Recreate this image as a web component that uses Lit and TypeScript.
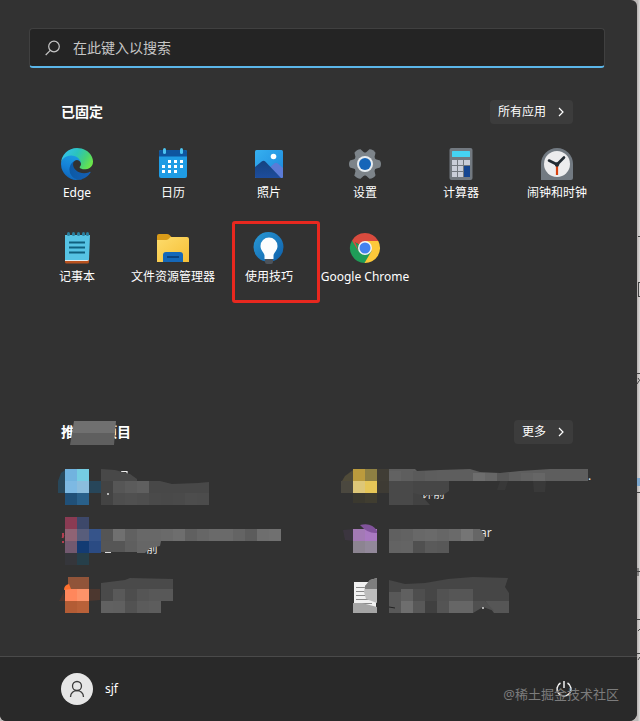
import { LitElement, html, svg, css } from "lit";
import { customElement } from "lit/decorators.js";
import { classMap } from "lit/directives/class-map.js";

type Block = [string, string];

/** Builds closed shapes from [points, fill] pairs. */
const blocks = (list: Block[]) =>
  list.map(([points, fill]) => svg`<polygon points=${points} fill=${fill} />`);

/** Builds a run of equal cells: start x, y, cell width, height, one fill per cell. */
const cells = (x: number, y: number, w: number, h: number, fills: string[]) =>
  fills.map((f, i) => svg`<rect x=${x + i * w} y=${y} width=${w} height=${h} fill=${f} />`);

const icon = (content: unknown) =>
  html`<svg class="icon" viewBox="0 0 32 32" aria-hidden="true">${content}</svg>`;

const edge = icon(svg`
  <defs>
    <linearGradient id="e1" x1="0" y1="0.7" x2="1" y2="0.7"><stop offset="0" stop-color="#0c59a4"/><stop offset="1" stop-color="#1560b5"/></linearGradient>
    <linearGradient id="e2" x1="0.6" y1="0" x2="0.3" y2="1"><stop offset="0" stop-color="#1b9de2"/><stop offset="0.5" stop-color="#1583d8"/><stop offset="1" stop-color="#0f63b8"/></linearGradient>
    <linearGradient id="e3" x1="0" y1="0.2" x2="1" y2="0.6"><stop offset="0" stop-color="#35c1f1"/><stop offset="0.45" stop-color="#2bc3bd"/><stop offset="0.75" stop-color="#46d178"/><stop offset="1" stop-color="#6be54a"/></linearGradient>
  </defs>
  <g transform="scale(0.125)">
    <path fill="url(#e1)" transform="translate(-4.6 -5)" d="M235.7 195.5a93.7 93.7 0 0 1-10.5 4.7 101.9 101.9 0 0 1-35.9 6.4c-47.3 0-88.5-32.5-88.5-74.3A31.5 31.5 0 0 1 117.1 105c-42.8 1.8-53.8 46.4-53.8 72.5 0 73.9 68.1 81.4 82.8 81.4 7.9 0 19.8-2.3 27-4.6l1.3-.4a128.3 128.3 0 0 0 66.6-52.8 4 4 0 0 0-5.3-5.6z"/>
    <path fill="url(#e2)" transform="translate(-4.6 -5)" d="M110.3 246.3A79.2 79.2 0 0 1 87.6 225a80.7 80.7 0 0 1 29.5-120c3.1-1.5 8.5-4.1 15.5-4a32.4 32.4 0 0 1 25.7 13 31.9 31.9 0 0 1 6.4 18.7c0-.2 24.5-79.6-80-79.6-43.9 0-80 41.7-80 78.2a130.2 130.2 0 0 0 12.1 56 128 128 0 0 0 156.4 67.1 75.6 75.6 0 0 1-62.8-8z"/>
    <path fill="url(#e3)" transform="translate(-4.6 -5)" d="M156.9 153.8c-.8 1-3.3 2.5-3.3 5.7 0 2.6 1.7 5.1 4.7 7.2 14.4 10 41.5 8.7 41.6 8.7a59.6 59.6 0 0 0 30.3-8.4 61.4 61.4 0 0 0 30.4-52.9c.3-22.4-8-37.3-11.3-43.9C228.1 28.8 182.4 5 132.6 5A128 128 0 0 0 4.6 131.2c.5-36.5 36.8-66 80-66 3.5 0 23.5.3 42 10 16.3 8.6 24.9 18.9 30.9 29.2 6.2 10.7 7.3 24.2 7.3 29.5s-2.7 13.3-7.9 19.9z"/>
  </g>`);

const calendar = icon(svg`
  <rect x="2" y="2" width="28" height="28" rx="2" fill="#1f9ce4"/>
  <path d="M4 2h24a2 2 0 0 1 2 2v4.5H2V4a2 2 0 0 1 2-2z" fill="#0e559f"/>
  <rect x="6" y="0" width="3" height="6" rx="1.5" fill="#4cc4f2"/>
  <rect x="23" y="0" width="3" height="6" rx="1.5" fill="#4cc4f2"/>
  <path fill="#fff" d="M11 12h3v3h-3zM17 12h3v3h-3zM23 12h3v3h-3zM5 17h3v3H5zM11 17h3v3h-3zM17 17h3v3h-3zM23 17h3v3h-3zM5 22h3v3H5zM11 22h3v3h-3zM17 22h3v3h-3z"/>`);

const photos = icon(svg`
  <defs>
    <linearGradient id="p1" x1="0" y1="0" x2="1" y2="1"><stop offset="0" stop-color="#36b0f0"/><stop offset="1" stop-color="#1c86da"/></linearGradient>
    <linearGradient id="p2" x1="0" y1="0" x2="0" y2="1"><stop offset="0" stop-color="#15437f"/><stop offset="1" stop-color="#1d4c9c"/></linearGradient>
    <clipPath id="pc"><rect x="2" y="2" width="28" height="28" rx="1.5"/></clipPath>
  </defs>
  <g clip-path="url(#pc)">
    <rect x="2" y="2" width="28" height="28" fill="url(#p1)"/>
    <path d="M15 21l6.500-5.700q1.500-1.200 3 0L30 20v10H15z" fill="#5b7bd6"/>
    <path d="M2 19l7-5.700q1.500-1.200 3 0L28 30H2z" fill="url(#p2)"/>
  </g>
  <circle cx="20.5" cy="8.500" r="2.800" fill="#fff"/>`);

const settings = icon(svg`
  <g fill="#7d848a">
    <circle cx="16" cy="16" r="11.5"/>
    ${[0, 60, 120].map((a) => svg`<path transform="rotate(${a} 16 16)" d="M1 12.500Q0 14 0 16t1 3.500l5 1.500h20l5-1.500q1-1.500 1-3.500t-1-3.500L26 11H6z"/>`)}
  </g>
  <circle cx="16" cy="16" r="8" fill="#e8edf1"/>
  <circle cx="16" cy="16" r="6" fill="#1565b8"/>`);

const calculator = icon(svg`
  <rect x="4.500" y="0" width="23" height="32" rx="2" fill="#727980"/>
  <rect x="7" y="3" width="18" height="6" rx="0.5" fill="#45d3f3"/>
  <path fill="#c9ced9" d="M7 12h5v5H7zM13 12h5v5h-5zM19 12h6v5h-6zM7 18h5v5H7zM13 18h5v5h-5zM7 24h5v5H7zM13 24h5v5h-5z"/>
  <rect x="19" y="18" width="6" height="11" fill="#154692"/>`);

const clock = icon(svg`
  <path d="M0 32V16a16 16 0 0 1 32 0v14a2 2 0 0 1-2 2z" fill="#727a82"/>
  <circle cx="16" cy="16" r="13" fill="#ececee"/>
  <path d="M16 17v10" stroke="#d8400f" stroke-width="2.200"/>
  <path d="M8 12.500l8 4 7-7" fill="none" stroke="#222b33" stroke-width="2.600" stroke-linecap="round" stroke-linejoin="round"/>
  <circle cx="16" cy="16.500" r="2.200" fill="#222b33"/>`);

const notepad = icon(svg`
  <rect x="4" y="25" width="24" height="6.500" rx="1.500" fill="#b9521f"/>
  <path d="M4 4h24v23a2 2 0 0 1-2 2H4z" fill="#e4eef2"/>
  <path d="M4 3h25l-1 25H4z" fill="#56c3e4"/>
  <g fill="#2a7f9f">${[7, 12, 17, 22, 26].map((x) => svg`<rect x=${x - 1} y="0" width="3" height="4" rx="1.500"/>`)}</g>
  <path d="M8 10.500h16M8 15.500h16M8 20.500h16" stroke="#10607f" stroke-width="2"/>`);

const folder = icon(svg`
  <defs><linearGradient id="f1" x1="0" y1="0" x2="1" y2="1"><stop offset="0" stop-color="#fddc6c"/><stop offset="1" stop-color="#f6bf35"/></linearGradient></defs>
  <path d="M0 4a2 2 0 0 1 2-2h8q1.500 0 2.500 1l2 2L10 9H0z" fill="#d99b18"/>
  <path d="M0 8h9q1.500 0 2.500-1l2-2H30a2 2 0 0 1 2 2v23H0z" fill="url(#f1)"/>
  <path d="M6 30v-7a3 3 0 0 1 3-3h14a3 3 0 0 1 3 3v7z" fill="#1568b9"/>
  <path d="M10 25h12" stroke="#0c437f" stroke-width="2"/>`);

const tips = icon(svg`
  <defs><linearGradient id="t1" x1="0" y1="0" x2="1" y2="1"><stop offset="0" stop-color="#2a9ad6"/><stop offset="1" stop-color="#0d5ea9"/></linearGradient></defs>
  <circle cx="15.500" cy="15" r="15" fill="url(#t1)"/>
  <path d="M12 26h8v4a2 2 0 0 1-2 2h-4a2 2 0 0 1-2-2z" fill="#4c535b"/>
  <path d="M16 5.500a8.500 8.500 0 0 1 8.500 8.500c0 4.500-3.500 6-4 9.500V27h-9v-3.500c-.5-3.500-4-5-4-9.500A8.500 8.500 0 0 1 16 5.500z" fill="#fbfcfd"/>`);

const chrome = icon(svg`
  <path d="M16 16L3 8.500a15 15 0 0 1 26 0z" fill="#d94b3e"/>
  <path d="M16 16L3 8.500A15 15 0 0 0 16 31l6.500-11.500z" fill="#1f9d58"/>
  <path d="M16 9h13.300A15 15 0 0 1 15.500 31l7-12z" fill="#fdc93a"/>
  <path d="M9.600 19.500L3 8.500l8 1.500 5-1h13.200L29 8.500 16 5 5 7z" fill="#d94b3e"/>
  <circle cx="16" cy="16" r="7" fill="#f4f4f4"/>
  <circle cx="16" cy="16" r="5.500" fill="#4382ee"/>`);

interface Pin { name: string; art: unknown; marked?: boolean }

const pins: Pin[] = [
  { name: "Edge", art: edge },
  { name: "日历", art: calendar },
  { name: "照片", art: photos },
  { name: "设置", art: settings },
  { name: "计算器", art: calculator },
  { name: "闹钟和时钟", art: clock },
  { name: "记事本", art: notepad },
  { name: "文件资源管理器", art: folder },
  { name: "使用技巧", art: tips, marked: true },
  { name: "Google Chrome", art: chrome },
];

/* Pixelated entries; each one lists its own view box and shapes. */
const recent = [
  {
    label: "项目 1",
    box: "29 460 288 54",
    art: svg`
      <path d="M121 471.500h6v3" fill="none" stroke="#eee" stroke-width="1.200"/>
      ${blocks([
        ["61,473 65,470 65,493 58,493 58,481", "#28475a"],
        ["89,481 101,481 101,493 89,493", "#27465a"],
        ["101,469 115,470 130,474 137,479 137,481 101,481", "#484848"],
        ["137,481 160,481 172,484 198,483 209,482 209,493 137,493", "#484848"],
        ["101,481 113,481 113,505 101,505", "#434343"],
      ])}
      ${cells(65, 469, 12, 12, ["#71b3df", "#75cde2"])}
      ${cells(65, 481, 12, 12, ["#7db9e3", "#8bbddd"])}
      ${cells(65, 493, 12, 12, ["#205078", "#29608a"])}
      ${cells(113, 481, 12, 12, ["#565656", "#5b5b5b", "#5f5f5f"])}
      ${cells(113, 493, 12, 12, ["#4e4e4e", "#505050", "#4e4e4e", "#4a4a4a", "#494949", "#4a4a4a", "#4d4d4d", "#4c4c4c"])}
      <circle cx="108" cy="494" r="1" fill="#ddd"/>`,
  },
  {
    label: "项目 2",
    box: "317 460 288 54",
    art: svg`
      <text x="421" y="498">钟前</text><text x="588" y="480">.</text>
      ${blocks([
        ["342,481 345,476 353,470 353,481", "#504b39"],
        ["389,469 415,469 417,471 440,470 470,469 480,472 500,473 520,471 550,469 588,469 588,481 389,481", "#5e5e5e"],
        ["389,481 413,481 413,505 389,505", "#494949"],
        ["413,481 449,481 449,491 443,495 413,495", "#464646"],
        ["413,493 421,495 430,505 413,505", "#424242"],
        ["500,481 508,481 505,490 497,490", "#383838"],
        ["533,481 546,481 545,492 534,492", "#393939"],
      ])}
      ${cells(353, 469, 12, 12, ["#bb9b3d", "#8e8043", "#403d35"])}
      ${cells(341, 481, 12, 12, ["#4b483f", "#dec778", "#e6c657", "#3e3b34"])}
      ${cells(353, 493, 12, 10, ["#3b392f", "#403d30"])}
      ${cells(389, 471, 12, 10, ["#626262", "#5e5e5e", "#5a5a5a", "#5d5d5d"])}
      ${cells(473, 473, 12, 8, ["#6d6d6d", "#666", "#575757", "#5e5e5e", "#626262", "#666"])}`,
  },
  {
    label: "项目 3",
    box: "29 514 288 54",
    art: svg`
      <text x="146" y="553">前</text><path d="M105 552.500h6" stroke="#ddd"/>
      <path d="M63 533v3M62.500 538l1-3M63 541v2" stroke="#b43d50" stroke-width="2"/>
      ${cells(65, 517, 12, 12, ["#8a3b53", "#3d486a"])}
      ${cells(65, 529, 12, 12, ["#8f6374", "#585d7b", "#36548a"])}
      ${cells(65, 541, 12, 12, ["#72596f", "#133b73", "#2b4b83"])}
      ${cells(65, 553, 12, 12, ["#35363b", "#263f4a"])}
      ${cells(101, 529, 12, 12, ["#555", "#707070", "#616161", "#686868", "#686868", "#6a6a6a", "#6e6e6e", "#606060", "#666", "#6a6a6a", "#6a6a6a", "#646464", "#5c5c5c", "#6e6e6e", "#707070"])}
      ${blocks([
        ["101,541 125,541 125,552 101,552", "#565656"],
        ["125,541 137,541 137,552 125,552", "#5f5f5f"],
        ["137,541 161,541 160,546 150,548 145,553 137,553", "#666"],
      ])}`,
  },
  {
    label: "项目 4",
    box: "317 514 288 54",
    art: svg`
      <text x="480" y="537">ar</text>
      ${blocks([
        ["343,530 353,529 353,541 345,540", "#3b353f"],
        ["473,529 480,529 485,536 484,541 473,541", "#666"],
      ])}
      ${cells(353, 529, 12, 12, ["#a37ab5", "#a979c1"])}
      <path d="M360 525q12-3 17 6v2q-9 1-17-8z" fill="#81539b"/>
      ${cells(353, 541, 12, 12, ["#8c8491", "#92889a"])}
      ${cells(389, 529, 12, 12, ["#606060", "#626262", "#686868", "#6a6a6a", "#666", "#6a6a6a", "#757575"])}
      ${cells(389, 541, 12, 12, ["#636363", "#646464", "#505050", "#5a5a5a", "#585858"])}`,
  },
  {
    label: "项目 5",
    box: "29 568 288 54",
    art: svg`
      ${blocks([
        ["68,577 89,577 89,589 68,589", "#915439"],
        ["59,601 64,592 65,601", "#4b352e"],
        ["89,589 100,589 100,600 89,601", "#4c372f"],
        ["101,583 125,580 130,578 173,579 173,601 101,601", "#4a4a4a"],
      ])}
      ${cells(65, 589, 12, 12, ["#ff875c", "#fd9369"])}
      ${cells(65, 601, 12, 12, ["#b35c35", "#b96139"])}
      <path d="M64 590q0-5 5-6l2 5z" fill="#ff702e"/>
      ${cells(113, 589, 12, 12, ["#595959", "#4d4d4d", "#555", "#585858", "#585858"])}
      ${cells(101, 601, 12, 12, ["#616161", "#606060", "#525252", "#5b5b5b", "#5d5d5d"])}`,
  },
  {
    label: "项目 6",
    box: "317 568 288 54",
    art: svg`
      <rect x="354" y="582" width="22" height="27" fill="#f1f1f1"/>
      <path d="M356 587.500h16M356 591.500h16M356 595.500h16M356 599.500h16M356 603.500h16" stroke="#8a8a8a"/>
      ${blocks([
        ["377,578 370,580 365,586 364,592 366,599 377,603", "#bdbdbd"],
        ["377,578 370,580 365,586 365,589 377,589", "#7e7e7e"],
        ["353,603 362,603 377,607 377,613 353,613", "#a5a5a5"],
        ["389,580 405,584 425,583 448,579 473,577 508,578 505,587 509,593 509,601 389,601", "#464646"],
        ["389,592 401,592 401,613 389,613", "#585858"],
        ["485,601 509,601 509,613 494,613", "#565656"],
      ])}
      ${cells(401, 589, 12, 12, ["#606060", "#4e4e4e", "#464646", "#525252", "#565656", "#565656"])}
      ${cells(401, 601, 12, 12, ["#6e6e6e", "#585858", "#404040", "#545454", "#666", "#666"])}
      <path d="M473 601h12l9 10-11-4-10 6z" fill="#505050"/>
      <path d="M389 607l6 1" stroke="#222"/><circle cx="483" cy="608" r="1" fill="#ddd"/>`,
  },
];

const chevron = html`<svg class="chevron" viewBox="0 0 8 10" aria-hidden="true"><path d="M2 1l4 4-4 4" fill="none" stroke="currentColor" stroke-width="1.200"/></svg>`;

@customElement("app-root")
export class AppRoot extends LitElement {
  static styles = css`
    * { box-sizing: border-box; }
    :host {
      display: flex;
      min-height: 100vh;
      background: #bdb9b8;
      font: 12px/20px "Noto Sans", "Noto Sans CJK SC", sans-serif;
      color: #fff;
    }
    button { font: inherit; color: inherit; border: 0; padding: 0; background: none; }
    h2 { margin: 0; font-size: 14px; line-height: 24px; font-weight: 700; }
    .menu {
      flex: 1;
      display: flex;
      flex-direction: column;
      padding-top: 28px;
      margin-bottom: 1px;
      background: #323232;
      border-radius: 0 6px 8px 6px;
      overflow: hidden;
    }
    .search {
      display: flex;
      align-items: center;
      gap: 12px;
      height: 40px;
      margin: 0 32px 0 29px;
      padding: 0 15px;
      background: #242424;
      border: 1px solid #404040;
      border-bottom: 2px solid #5bb6e9;
      border-radius: 4px;
    }
    .glass { width: 16px; height: 16px; flex: none; }
    .search input {
      flex: 1;
      min-width: 0;
      border: 0;
      padding: 0;
      outline: 0;
      background: none;
      color: #fff;
      font: 14px/20px "Noto Sans", "Noto Sans CJK SC", sans-serif;
    }
    .search input::placeholder { color: #c6c6c6; opacity: 1; }
    .head {
      display: flex;
      justify-content: space-between;
      align-items: center;
      margin: 32px 64px 0 61px;
    }
    .head.recommended { margin-top: 36px; }
    .hidden-title { position: relative; }
    .cover { position: absolute; left: 9px; top: 1px; width: 46px; height: 24px; }
    .more {
      display: flex;
      align-items: center;
      gap: 11px;
      height: 24px;
      padding: 0 8px;
      background: #3c3c3c;
      border-radius: 4px;
    }
    .chevron { width: 8px; height: 10px; }
    .pins {
      display: grid;
      grid-template-columns: repeat(6, 1fr);
      grid-template-rows: repeat(3, 84px);
      margin: 8px 32px 0 29px;
    }
    .pin {
      position: relative;
      display: flex;
      flex-direction: column;
      align-items: center;
      gap: 3px;
      padding-top: 16px;
      white-space: nowrap;
    }
    .icon { width: 32px; height: 32px; flex: none; }
    .marked::after {
      content: "";
      position: absolute;
      inset: 5px -3px -3px 11px;
      border: 3px solid #e8281f;
      border-radius: 3px;
      pointer-events: none;
    }
    .recent {
      display: grid;
      grid-template-columns: 1fr 1fr;
      margin: 16px 32px 34px 29px;
    }
    .entry { display: flex; }
    .mosaic { width: 288px; height: 54px; flex: none; overflow: visible; }
    .mosaic text { fill: #e6e6e6; font-size: 12px; }
    .foot {
      display: flex;
      justify-content: space-between;
      align-items: center;
      height: 65px;
      margin-top: auto;
      padding: 0 64px 0 61px;
      background: #292929;
      border-top: 1px solid #4a4a4a;
      position: relative;
    }
    .user { display: flex; align-items: center; gap: 12px; }
    .avatar { width: 32px; height: 32px; }
    .power { display: flex; }
    .power svg { width: 18px; height: 18px; }
    .watermark {
      position: absolute;
      right: 18px;
      bottom: 17px;
      font-size: 13px;
      color: #7c7c7c;
    }
    .behind { width: 3px; flex: none; background: linear-gradient(90deg, #b5b1b0, #dedbda); }
    .behind svg { display: block; width: 3px; height: 700px; }
  `;

  render() {
    return html`
      <main class="menu">
        <label class="search">
          <svg class="glass" viewBox="0 0 16 16" aria-hidden="true"><g fill="none" stroke="#c6c6c6" stroke-width="1.200"><circle cx="9" cy="6.500" r="5.300"/><path d="M5.300 10.300L.700 15"/></g></svg>
          <input type="text" placeholder="在此键入以搜索" aria-label="在此键入以搜索" />
        </label>
        <header class="head">
          <h2>已固定</h2>
          <button class="more">所有应用 ${chevron}</button>
        </header>
        <section class="pins">
          ${pins.map((p) => html`<button class=${classMap({ pin: true, marked: !!p.marked })}>${p.art}<span>${p.name}</span></button>`)}
        </section>
        <header class="head recommended">
          <h2 class="hidden-title">推荐的项目
            <svg class="cover" viewBox="0 0 46 24" aria-hidden="true"><path d="M4 0h42l-1 12H2z" fill="#707070"/><path d="M2 12h43l-1 12H0z" fill="#5f5f5f"/></svg>
          </h2>
          <button class="more">更多 ${chevron}</button>
        </header>
        <section class="recent">
          ${recent.map((r) => html`<button class="entry" aria-label=${r.label}><svg class="mosaic" viewBox=${r.box}>${r.art}</svg></button>`)}
        </section>
        <footer class="foot">
          <button class="user">
            <svg class="avatar" viewBox="0 0 32 32" aria-hidden="true"><circle cx="16" cy="16" r="16" fill="#e6e6e6"/><g fill="none" stroke="#3a3a3a" stroke-width="1.300"><circle cx="16" cy="13" r="4.500"/><path d="M9.500 24c0-8.500 13-8.500 13 0"/></g></svg>
            <span>sjf</span>
          </button>
          <span class="watermark">@稀土掘金技术社区</span>
          <button class="power" aria-label="电源">
            <svg viewBox="0 0 18 18" aria-hidden="true"><path d="M5.500 3a7 7 0 1 0 7 0M9 1v7" fill="none" stroke="#f0f0f0" stroke-width="1.500"/></svg>
          </button>
        </footer>
      </main>
      <div class="behind">
        <svg viewBox="0 0 3 700" aria-hidden="true">
          <path d="M1 236.500h2M1 282.500h2M1 296.500h2M1.500 282v15M0 373.500h3M1 378l2 3M0 384l2-3M0 492.500h3M0 571.500h3M1 568v8M0 619.500h3M1 631l2-2M0 653.500h3M1 660l2-3" stroke="#444" fill="none"/>
          <path d="M0 478h3v8H0z" fill="#7fa9cf"/>
        </svg>
      </div>
    `;
  }
}
